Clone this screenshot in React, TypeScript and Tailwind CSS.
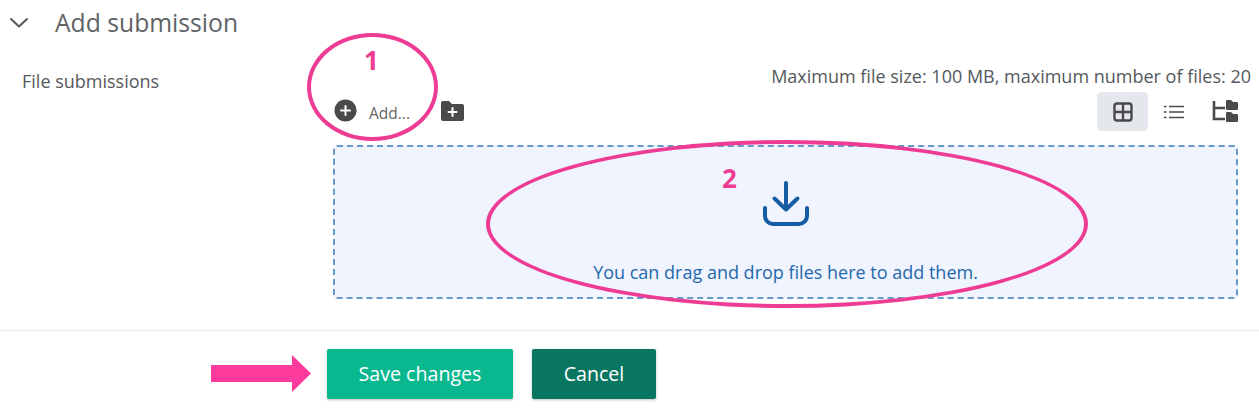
export default function App() {
  return (
    <div className="relative w-[1259px] h-[409px] overflow-hidden bg-white text-[#55595c]" style={{ fontFamily: '"Open Sans", sans-serif' }}>
      {/* header */}
      <div className="flex items-center h-[46px] pl-[9px]">
        <svg width="20" height="12" viewBox="0 0 20 12" fill="none" stroke="#55595c" strokeWidth="2" strokeLinecap="round" strokeLinejoin="round"><path d="M2 2l8 7.5L18 2" /></svg>
        <span className="ml-[26px] text-[24.7px] leading-[30px] text-[#5f6366]">Add submission</span>
      </div>
      {/* form row */}
      <div className="flex">
        <div className="w-[333px] pl-[22px] pt-[22px] text-[18px] leading-[26px]">File submissions</div>
        <div className="w-[905px]">
          <div className="flex justify-end pt-[18px] text-[18px] leading-[24px] mr-[-13px]">Maximum file size: 100 MB, maximum number of files: 20</div>
          <div className="flex items-start justify-between h-[39px] mt-[4px]">
            <div className="flex items-start">
              <svg width="23" height="23" viewBox="0 0 23 23" className="ml-[1px] mt-[7px]"><circle cx="11.5" cy="11.5" r="11" fill="#4a4a4a" /><path d="M11.5 7v9M7 11.5h9" stroke="#fff" strokeWidth="2" strokeLinecap="round" /></svg>
              <span className="ml-[12px] mt-[11px] text-[15.5px] leading-[20px] text-[#666]">Add...</span>
              <svg width="23" height="21" viewBox="0 0 23 21" className="ml-[31px] mt-[8px]"><path d="M0 3a2 2 0 0 1 2-2h6l3 3h10a2 2 0 0 1 2 2v13a2 2 0 0 1-2 2H2a2 2 0 0 1-2-2z" fill="#4a4a4a" /><path d="M11.5 8v8M7.5 12h8" stroke="#fff" strokeWidth="2" strokeLinecap="round" /></svg>
            </div>
            <div className="flex items-center mr-[-12px]">
              <div className="flex items-center justify-center w-[51px] h-[39px] rounded-[4px] bg-[#e4e7eb]">
                <svg width="20" height="20" viewBox="0 0 20 20" fill="none" stroke="#4a4a4a" strokeWidth="2.4"><rect x="1.5" y="1.5" width="17" height="17" rx="2.5" /><path d="M10 1.5v17M1.500 10h17" /></svg>
              </div>
              <div className="flex items-center justify-center w-[51px] h-[39px]">
                <svg width="20" height="14" viewBox="0 0 20 14" fill="none" stroke="#4a4a4a" strokeWidth="1.5"><path d="M5 1.500h15M5 7h15M5 12.500h15" /><path d="M0 1.500h2.500M0 7h2.500M0 12.500h2.500" /></svg>
              </div>
              <div className="flex items-center justify-center w-[51px] h-[39px] pl-[1px]">
                <svg width="26" height="23" viewBox="0 0 26 23"><path d="M2 1v18h11M2 8h11" fill="none" stroke="#4a4a4a" strokeWidth="2.6" /><path d="M14 1a1 1 0 0 1 1-1h4l2 2h4a1 1 0 0 1 1 1v6a1 1 0 0 1-1 1H15a1 1 0 0 1-1-1z" fill="#4a4a4a" /><path d="M14 13a1 1 0 0 1 1-1h4l2 2h4a1 1 0 0 1 1 1v6a1 1 0 0 1-1 1H15a1 1 0 0 1-1-1z" fill="#4a4a4a" /></svg>
              </div>
            </div>
          </div>
          <div className="flex flex-col items-center h-[154px] mt-[14px] rounded-[4px] border-2 border-dashed border-[#6699cc] bg-[#f0f4fe] text-[#1f68ad]">
            <svg width="48" height="46" viewBox="0 0 48 46" fill="none" stroke="#155ca3" strokeWidth="4" strokeLinecap="round" strokeLinejoin="round" className="mt-[34px]"><path d="M24 2v26M12.500 17.500L24 28.500l11.500-11M3 27v8a8 8 0 0 0 8 8h26a8 8 0 0 0 8-8v-8" /></svg>
            <div className="mt-[33px] text-[18px] leading-[24px]">You can drag and drop files here to add them.</div>
          </div>
        </div>
      </div>
      {/* footer */}
      <div className="mt-[31px] border-t border-[#e8eaed] h-[78px] flex pt-[18px] pl-[327px] gap-[19px]">
        <button className="w-[186px] h-[50px] rounded-[2px] bg-[#0ab88f] text-white text-[19.6px] shadow-[0_1px_3px_rgba(0,0,0,0.25)]">Save changes</button>
        <button className="w-[124px] h-[50px] rounded-[2px] bg-[#087660] text-white text-[19.6px] shadow-[0_1px_3px_rgba(0,0,0,0.25)]">Cancel</button>
      </div>
      {/* annotations */}
      <div className="absolute left-[307px] top-[33px] w-[131px] h-[108px] rounded-[50%] border-[4px] border-[#ee3c95]" />
      <div className="absolute left-[486px] top-[140px] w-[602px] h-[168px] rounded-[50%] border-[4px] border-[#ee3c95]" />
      <div className="absolute left-[364px] top-[43px] text-[26px] leading-[34px] font-bold text-[#ee3c95]">1</div>
      <div className="absolute left-[722px] top-[161px] text-[26px] leading-[34px] font-bold text-[#ee3c95]">2</div>
      <svg className="absolute left-[211px] top-[355px]" width="100" height="37" viewBox="0 0 100 37"><path d="M0 10h81V0l19 18.500L81 37V27H0z" fill="#fc3b9c" /></svg>
    </div>
  );
}
